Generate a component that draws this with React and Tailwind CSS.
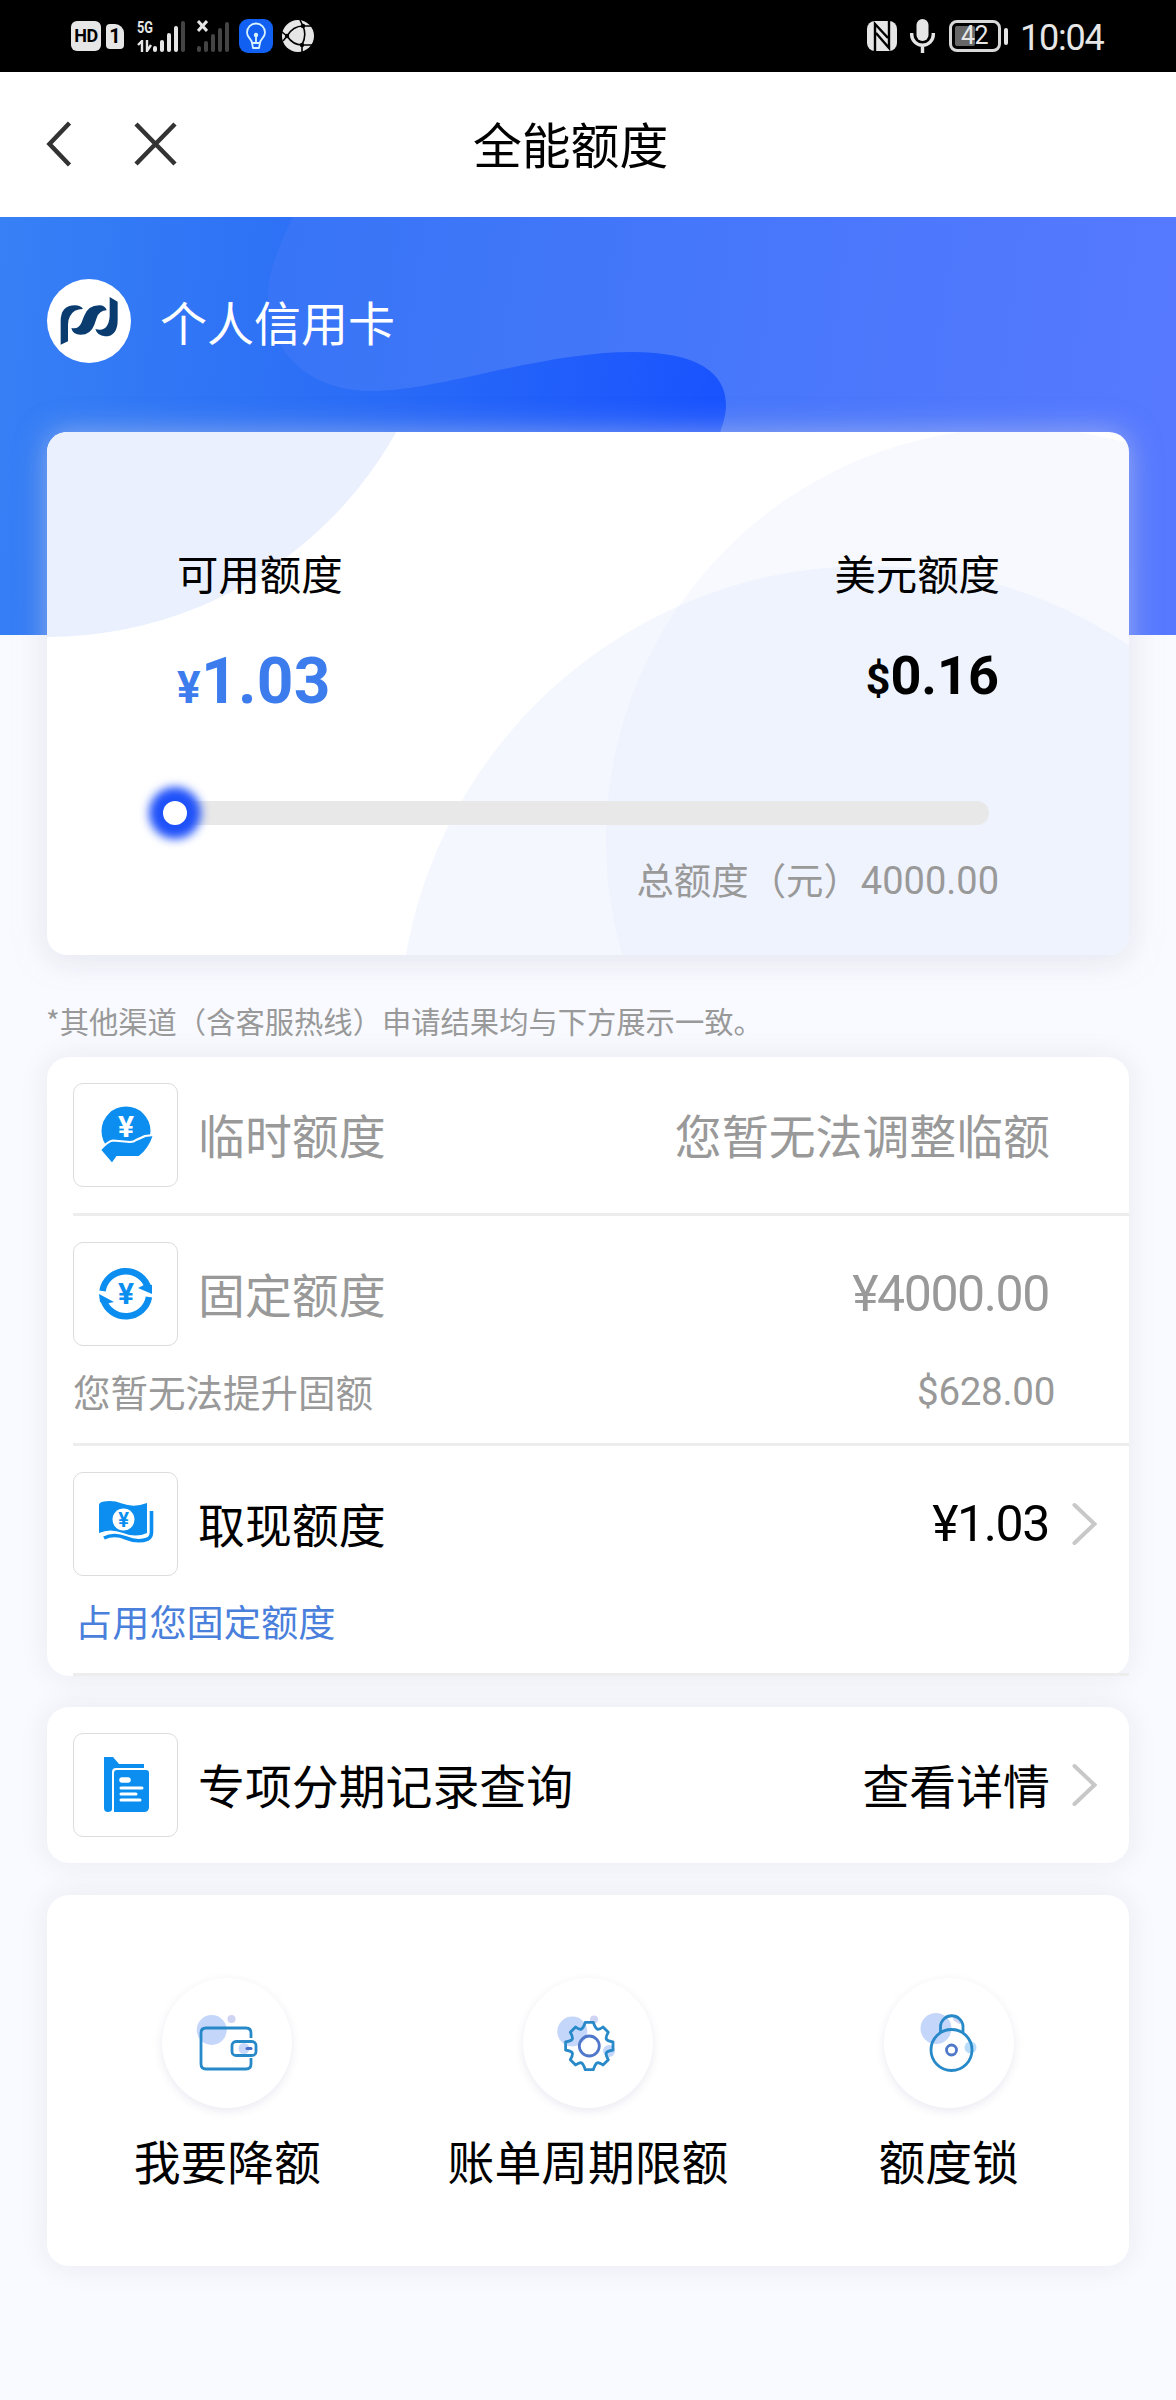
const blue = '#0b8eef'

export default function App() {
  return (
    <div className="min-h-[2400px] w-[1176px] overflow-hidden bg-[#f8faff] font-['Noto_Sans_CJK_SC',sans-serif] text-black">
      <StatusBar />
      <Header />
      <Hero />
      <main className="relative px-[47px]">
        <QuotaCard />
        <p className="mt-[46px] -ml-px text-[29.3px] leading-[38px] whitespace-nowrap text-[#999]">
          *其他渠道（含客服热线）申请结果均与下方展示一致。
        </p>

        <section className="mt-[18px] rounded-[22px] bg-white shadow-[0_0_30px_rgba(40,40,70,0.08)]">
          <Row icon={<HandCoinIcon />} label="临时额度" muted value="您暂无法调整临额" />
          <Divider />
          <Row icon={<CycleIcon />} label="固定额度" muted value="¥4000.00" numeric />
          <div className="flex h-[71px] justify-between pr-[74px] pl-[26px] text-[#999]">
            <span className="text-[37.5px] leading-[38px]">您暂无法提升固额</span>
            <span className="font-[Roboto] text-[38.5px] leading-[40px] tracking-[-0.3px]">$628.00</span>
          </div>
          <Divider />
          <Row icon={<CashIcon />} label="取现额度" value="¥1.03" numeric arrow />
          <div className="h-[71px] pl-[28px] text-[37.2px] leading-[38px] text-[#4a7fdc]">
            占用您固定额度
          </div>
          <Divider />
        </section>

        <section className="mt-[31px] rounded-[22px] bg-white shadow-[0_0_30px_rgba(40,40,70,0.08)]">
          <Row icon={<RecordIcon />} label="专项分期记录查询" value="查看详情" arrow />
        </section>

        <section className="mt-[32px] grid h-[371px] grid-cols-3 rounded-[22px] bg-white pt-[83px] shadow-[0_0_30px_rgba(40,40,70,0.08)]">
          <Action icon={<WalletIcon />} label="我要降额" />
          <Action icon={<GearIcon />} label="账单周期限额" />
          <Action icon={<LockIcon />} label="额度锁" />
        </section>
      </main>
    </div>
  )
}

function StatusBar() {
  return (
    <div className="flex h-[72px] items-center justify-between bg-black pr-[70px] pl-[71px] font-[Roboto] text-[#e6e6e6]">
      <div className="flex items-center">
        <span className="flex h-[30px] w-[30px] items-center justify-center rounded-[6px] bg-[#e6e6e6] text-[18px] leading-none font-bold tracking-[-0.5px] text-black">
          HD
        </span>
        <span className="ml-[5px] flex h-[25px] w-[18px] items-center justify-center rounded-[4px] rounded-tr-[9px] bg-[#e6e6e6] text-[20px] leading-none font-bold text-black">
          1
        </span>
        <div className="ml-[13px] flex h-[32px] w-[50px] items-end gap-[1px]">
          <div className="flex h-[32px] w-[17px] flex-col justify-between">
            <span className="origin-left scale-x-[0.75] text-[17px] leading-[14px] font-bold">5G</span>
            <svg width="15" height="12" viewBox="0 0 15 12" fill="none" stroke="#e6e6e6" strokeWidth="2.400">
              <path d="M1 5L5 1V12M10 0V11L14 5" />
            </svg>
          </div>
          <SignalBars active={4} />
        </div>
        <div className="relative ml-[10px] flex h-[32px] w-[34px] items-end">
          <svg className="absolute top-0 left-0" width="11" height="12" viewBox="0 0 11 12" stroke="#e6e6e6" strokeWidth="3">
            <path d="M1 1L10 11M10 1L1 11" />
          </svg>
          <SignalBars active={0} short />
        </div>
        <svg className="ml-[8px]" width="34" height="34" viewBox="0 0 34 34" fill="none">
          <rect width="34" height="34" rx="9" fill="#1160f2" />
          <path
            d="M13 24C13 20 8 19 8 13.500A9 9 0 0 1 26 13.500C26 19 21 20 21 24ZM13 24L14 29H20L21 24M17 16V24"
            stroke="#d8f2ff"
            strokeWidth="1.800"
            strokeLinejoin="round"
          />
          <circle cx="17" cy="16" r="2.200" fill="#d8f2ff" />
        </svg>
        <svg className="ml-[9px]" width="32" height="32" viewBox="0 0 32 32" fill="none">
          <circle cx="16" cy="16" r="16" fill="#e6e6e6" />
          <path
            d="M5 16Q11 6 21 6L31 6M5 16Q11 25 20 25L30 25M21 6Q25 15 20 25L20 32M0 12L5 16L1 21M21 6L18 0"
            stroke="#000"
            strokeWidth="1.600"
          />
          <g fill="#000">
            <circle cx="5" cy="16" r="2.200" />
            <circle cx="21" cy="6" r="2.200" />
            <circle cx="20" cy="25" r="2.200" />
          </g>
        </svg>
      </div>

      <div className="flex items-center">
        <svg width="30" height="30" viewBox="0 0 30 30">
          <rect width="30" height="30" rx="8" fill="#e6e6e6" />
          <path d="M8 30V3L21 17M9 12L22 27V0" fill="none" stroke="#000" strokeWidth="2.400" />
        </svg>
        <svg className="ml-[13px]" width="25" height="34" viewBox="0 0 25 34" fill="none" stroke="#e6e6e6" strokeWidth="3.400">
          <rect x="6.500" y="0" width="12" height="22" rx="6" fill="#e6e6e6" stroke="none" />
          <path d="M1.700 14V15.500A10.800 10.800 0 0 0 23.300 15.500V14M12.500 26V34" />
        </svg>
        <div className="ml-[14px] flex h-[32px] w-[52px] items-center rounded-[8px] border-[3px] border-[#d8d8d8] p-[3px]">
          <div className="relative h-full w-[20px] rounded-[2px] bg-[#666]">
            <span className="absolute top-[-2px] left-[6px] text-[25px] leading-[24px] tracking-[-0.5px]">42</span>
          </div>
        </div>
        <div className="ml-[3px] h-[17px] w-[4px] rounded-full bg-[#e6e6e6]" />
        <span className="mt-[3px] ml-[12px] w-[86px] text-[36px] leading-[40px] tracking-[-1.2px]">10:04</span>
      </div>
    </div>
  )
}

function SignalBars({ active, short }) {
  const heights = short ? [6, 11, 18, 24, 30] : [6, 12, 19, 26, 31]
  return (
    <div className={short ? 'flex items-end gap-[3px]' : 'ml-[-2px] flex items-end gap-[3px]'}>
      {heights.map((h, i) => (
        <span
          key={i}
          className={i < active ? 'w-[4px] rounded-full bg-[#e6e6e6]' : 'w-[4px] rounded-full bg-[#444]'}
          style={{ height: h }}
        />
      ))}
    </div>
  )
}

function Header() {
  return (
    <header className="flex h-[145px] items-center bg-white pb-[2px] pl-[46px]">
      <svg width="26" height="46" viewBox="0 0 26 46" fill="none" stroke="#333" strokeWidth="4.500">
        <path d="M23.500 2L3.500 23L23.500 44" />
      </svg>
      <svg className="ml-[62px]" width="43" height="44" viewBox="0 0 43 44" stroke="#333" strokeWidth="4.500">
        <path d="M2 2L41 42M41 2L2 42" />
      </svg>
      <h1 className="ml-[296px] pb-[2px] text-[48.8px] leading-[56px]">全能额度</h1>
    </header>
  )
}

function Hero() {
  return (
    <div className="relative h-[418px]">
      <svg className="absolute inset-0" width="1176" height="418" viewBox="0 0 1176 418">
        <defs>
          <linearGradient id="base" gradientUnits="userSpaceOnUse" x1="0" y1="0" x2="720" y2="60">
            <stop offset="0" stopColor="#3780f5" />
            <stop offset="0.5" stopColor="#2b6df6" />
            <stop offset="1" stopColor="#1a54fe" />
          </linearGradient>
          <linearGradient id="wave" gradientUnits="userSpaceOnUse" x1="270" y1="0" x2="1176" y2="120">
            <stop offset="0" stopColor="#3775f6" />
            <stop offset="1" stopColor="#5679ff" />
          </linearGradient>
        </defs>
        <rect width="1176" height="418" fill="url(#base)" />
        <path
          d="M293 0C278 30 267 58 268 82C270 135 308 174 372 174C440 174 540 135 632 135C698 135 726 156 726 188C726 200 722 209 718 222V418H1176V0Z"
          fill="url(#wave)"
        />
      </svg>
      <div className="relative flex items-center pt-[62px] pl-[47px]">
        <div className="h-[84px] w-[84px] rounded-full bg-white">
          <svg width="84" height="84" viewBox="21 28 252 252" fill="#0a3c70">
            <path d="M62 225V155Q62 107 105 107Q122 107 129 118Q100 118 90 140Q84 150 84 165V215Z" />
            <path d="M94 175Q115 180 124 160L132 140Q143 107 178 107Q195 107 200 122Q178 122 170 145L163 165Q152 195 122 195Q98 195 94 175Z" />
            <path d="M166 178Q205 190 209 140V82L233 96V150Q233 200 195 200Q172 198 166 178Z" />
          </svg>
        </div>
        <span className="ml-[29px] text-[47px] leading-[56px] text-white">个人信用卡</span>
      </div>
    </div>
  )
}

function QuotaCard() {
  return (
    <section className="relative mt-[-203px] h-[523px] rounded-[20px] bg-white shadow-[0_0_30px_rgba(235,235,245,0.5),0_6px_30px_rgba(40,40,60,0.08)]">
      <div className="absolute inset-0 overflow-hidden rounded-[20px]">
        <svg width="1082" height="523" viewBox="47 432 1082 523">
          <circle cx="47" cy="237" r="400" fill="#eaf0fd" />
          <circle cx="868" cy="1035" r="469" fill="#f4f7fe" />
          <circle cx="1018" cy="840" r="412" fill="#dfe6fb" fillOpacity="0.25" />
        </svg>
      </div>
      <div className="relative pt-[120px]">
        <div className="flex justify-between pr-[129px] pl-[130px] text-[41.4px] leading-[40px]">
          <span>可用额度</span>
          <span>美元额度</span>
        </div>
        <div className="mt-[57px] flex h-[63px] items-start justify-between pr-[130px] pl-[130px] font-[Roboto] font-bold">
          <div className="pt-px text-[64px] leading-[64px] tracking-[0.3px] text-[#3d7ced]">
            <span className="text-[44px]">¥</span>1.03
          </div>
          <div className="text-[54px] leading-[54px]">
            <span className="text-[43px]">$</span>0.16
          </div>
        </div>
        <div className="mt-[89px] mr-[140px] ml-[116px] h-[24px] rounded-full bg-[#e8e8e8]">
          <div className="h-[24px] w-[24px] rounded-full bg-white shadow-[0_0_10px_14px_#1f51f9]" />
        </div>
        <div className="mt-[36px] flex justify-end pr-[130px] text-[#999]">
          <span className="text-[37.4px] leading-[37px]">总额度（元）</span>
          <span className="font-[Roboto] text-[38px] leading-[41px]">4000.00</span>
        </div>
      </div>
    </section>
  )
}

function Divider() {
  return <div className="ml-[26px] h-[3px] bg-[#ededee]" />
}

function Row({ icon, label, value, muted, numeric, arrow }) {
  return (
    <div className={muted ? 'flex items-center py-[26px] pl-[26px] text-[#999]' : 'flex items-center py-[26px] pl-[26px]'}>
      <div className="flex h-[104px] w-[105px] items-center justify-center rounded-[10px] border border-[#dcdcdc]">
        {icon}
      </div>
      <span className="ml-[20px] flex-1 pb-[3px] text-[46.9px] leading-[56px]">{label}</span>
      <span
        className={
          numeric ? 'font-[Roboto] text-[50px] leading-[56px] tracking-[-1.4px]' : 'pb-[3px] text-[46.9px] leading-[56px]'
        }
      >
        {value}
      </span>
      <div className={numeric ? 'ml-[23px] w-[57px]' : 'ml-[22px] w-[57px]'}>
        {arrow && (
          <svg width="27" height="44" viewBox="0 0 27 44" fill="none" stroke="#c8c8c8" strokeWidth="4" strokeLinecap="round">
            <path d="M2.500 3L22.500 22L2.500 41" />
          </svg>
        )}
      </div>
    </div>
  )
}

function Action({ icon, label }) {
  return (
    <div className="flex flex-col items-center">
      <div className="flex h-[130px] w-[130px] items-center justify-center rounded-full bg-white shadow-[0_3px_10px_rgba(60,60,140,0.11)]">
        {icon}
      </div>
      <span className="mt-[24px] text-[46.8px] leading-[56px]">{label}</span>
    </div>
  )
}

function HandCoinIcon() {
  return (
    <svg width="60" height="60" viewBox="0 0 60 60">
      <circle cx="30" cy="26" r="24.500" fill={blue} />
      <path
        d="M4 45Q12 36 17 35.500L34 37Q38 37 40 35Q47 32 49 31L58 30Q53 45 43 52L21 52L16 59Z"
        fill={blue}
        stroke="#fff"
        strokeWidth="2"
      />
      <text x="30" y="32" textAnchor="middle" fill="#fff" className="font-[Roboto] text-[30px] font-bold">¥</text>
    </svg>
  )
}

function CycleIcon() {
  return (
    <svg width="60" height="60" viewBox="0 0 60 60">
      <g fill="none" stroke={blue} strokeWidth="6.500">
        <path d="M6.500 27A23.500 23.500 0 0 1 52.500 25" />
        <path d="M53 33A23.500 23.500 0 0 1 7.500 36" />
      </g>
      <path d="M42 24L50 20L56 21V30ZM18 38L9 40L4 38L3 30Z" fill={blue} />
      <text x="30" y="40" textAnchor="middle" fill={blue} className="font-[Roboto] text-[30px] font-bold">¥</text>
    </svg>
  )
}

function CashIcon() {
  return (
    <svg width="60" height="60" viewBox="0 0 60 60">
      <path d="M3 11Q3 8 8 7.500Q17 6 26 9.500Q38 14 51 9V39Q40 44 27 39Q14 34 3 39Z" fill={blue} />
      <path d="M8 44Q18 39 30 44Q42 49 52 45Q55.500 43 55.500 38V17" fill="none" stroke={blue} strokeWidth="3.600" />
      <circle cx="27.500" cy="25.500" r="11" fill="#fff" />
      <text x="27.500" y="32.500" textAnchor="middle" fill={blue} className="font-[Roboto] text-[20px] font-bold">¥</text>
    </svg>
  )
}

function RecordIcon() {
  return (
    <svg width="60" height="60" viewBox="0 0 60 60">
      <path d="M8 2H17L23 9H48V13H20Q16 13 16 17V54Q16 57 12 57Q8 57 8 53Z" fill={blue} />
      <path d="M21 15H50Q53 15 53 18V52Q53 57 48 57H18V18Q18 15 21 15Z" fill={blue} />
      <g stroke="#fff" strokeLinecap="round">
        <path d="M26 25H32" strokeWidth="5.500" />
        <path d="M25 33H46M25 39H40M25 45H44" strokeWidth="3" />
      </g>
    </svg>
  )
}

function WalletIcon() {
  return (
    <svg width="70" height="70" viewBox="193 2008 70 70" fill="none">
      <circle cx="212.700" cy="2030" r="15" fill="#c4d6fa" />
      <circle cx="232.500" cy="2019" r="4" fill="#cfd4f3" />
      <circle cx="245" cy="2048.500" r="5.500" fill="#c9d8fa" />
      <g stroke="#2789c8" strokeWidth="2.800">
        <path d="M252 2038V2033Q252 2028 247 2028H207Q202 2028 202 2033V2064Q202 2069 207 2069H247Q252 2069 252 2064V2058" />
        <rect x="233" y="2041.500" width="24" height="14" rx="4" />
      </g>
      <path d="M248 2048.500H252" stroke="#4a6fc8" strokeWidth="3" strokeLinecap="round" />
    </svg>
  )
}

function GearIcon() {
  return (
    <svg width="70" height="70" viewBox="553 2008 70 70" fill="none">
      <circle cx="572.300" cy="2031.500" r="15" fill="#c4d6fa" />
      <circle cx="594" cy="2019.500" r="4" fill="#cfd4f3" />
      <circle cx="609" cy="2051" r="6" fill="#c4d6fa" />
      <path
        d="M585.300 2022.300H593.300Q595.300 2028.300 597.300 2029.100Q599.300 2029.800 603 2027L608.300 2032.300Q605.500 2037 606.300 2039Q607.300 2041 613 2042V2050Q607.300 2051 606.300 2053Q605.500 2055 608.300 2059.700L603 2065Q599.300 2062.200 597.300 2062.900Q595.300 2063.700 593.300 2069.700H585.300Q583.300 2063.700 581.300 2062.900Q579.300 2062.200 575.600 2065L570.300 2059.700Q573.100 2055 572.300 2053Q571.300 2051 565.600 2050V2042Q571.300 2041 572.300 2039Q573.100 2037 570.300 2032.300L575.600 2027Q579.300 2029.800 581.300 2029.100Q583.300 2028.300 585.300 2022.300Z"
        stroke="#2789c8"
        strokeWidth="2.800"
        strokeLinejoin="round"
      />
      <circle cx="589.300" cy="2046" r="10" stroke="#5078ca" strokeWidth="2.800" />
    </svg>
  )
}

function LockIcon() {
  return (
    <svg width="70" height="70" viewBox="914 2008 70 70" fill="none">
      <circle cx="936" cy="2028.500" r="15.500" fill="#c4d6fa" />
      <circle cx="970.500" cy="2047.500" r="6" fill="#b9dcfa" />
      <path d="M955 2019L960 2022" stroke="#cfd4f3" strokeWidth="4" strokeLinecap="round" />
      <g stroke="#2789c8" strokeWidth="2.800">
        <path d="M940.500 2032V2026A11.300 11.300 0 0 1 963 2026V2032" />
        <circle cx="951.500" cy="2050" r="20.500" />
      </g>
      <circle cx="951.500" cy="2050" r="5" stroke="#5078ca" strokeWidth="2.800" />
    </svg>
  )
}
